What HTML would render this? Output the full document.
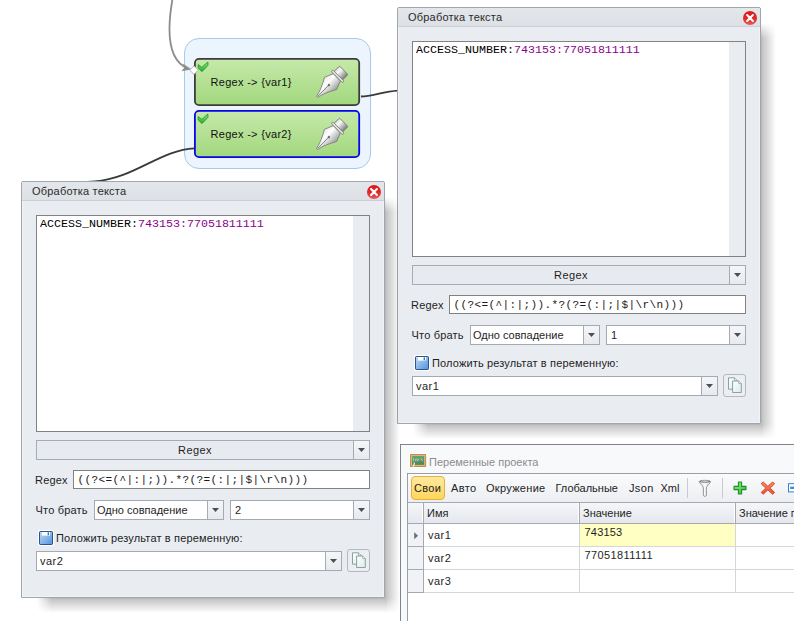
<!DOCTYPE html>
<html><head><meta charset="utf-8">
<style>
html,body{margin:0;padding:0}
html{overflow:hidden;background:#fff}
body{width:794px;height:621px;overflow:hidden;background:#fff;position:relative;font:11px/13px "Liberation Sans","DejaVu Sans",sans-serif;color:#1e1e1e}
.abs,.dlg *,.pnl *{position:absolute;box-sizing:border-box}
svg{position:absolute;left:0;top:0;overflow:visible}
.dlg svg *,.pnl svg *{position:static}
/* flow */
.grp{left:184px;top:38px;width:187px;height:131px;border:1px solid #a6c9ec;border-radius:15px;background:#ecf4fd}
.act{left:194px;width:166px;height:48px;padding:2px}
.act span{position:absolute;left:16.5px;top:18px;white-space:nowrap;color:#111;letter-spacing:.3px}
/* dialogs */
.dlg{position:absolute;width:364px;height:417px;background:#e9ecf1;border:1px solid #a0a6ae;box-sizing:border-box;box-shadow:inset 0 0 0 1px rgba(255,255,255,.4);border-radius:2px 2px 0 0}
.sh{position:absolute;pointer-events:none}
.dlg .tb{left:0;top:0;width:362px;height:19px;border-radius:1px 1px 0 0;background:linear-gradient(#e3e6ea,#dde1e6);border-bottom:1px solid #ccd0d6}
.dlg .tt{left:10px;top:3px;white-space:nowrap;color:#2a2a2a;letter-spacing:.2px}
.dlg .ta{left:14px;top:33px;width:334px;height:216px;background:#fff;border:1px solid #828282}
.dlg .sb{right:0;top:0;width:16px;height:214px;background:#e9ecf1}
.mono{font-family:"Liberation Mono","DejaVu Sans Mono",monospace;font-size:11.67px;white-space:nowrap}
.dlg .code{left:3px;top:2px;color:#000}
.dlg .code i{font-style:normal;color:#8b008b}
.btn{background:#e7eaef;border:1px solid #a6acb5}
.dlg .rb{left:14px;top:257px;width:334px;height:20px;text-align:center;line-height:18px;padding-right:16px;letter-spacing:.4px}
.dlg .ar{width:16px;top:0;bottom:0;right:0;border-left:1px solid #a6acb5;background:linear-gradient(#f5f6f8,#e8eaee)}
.dlg .ar:after{content:"";position:absolute;left:4px;top:7px;width:7px;height:4px;background:#4b5058;clip-path:polygon(0 0,100% 0,50% 100%)}
.dlg .lb{white-space:nowrap}
.dlg .in{background:#fff;border:1px solid #a4aab3;white-space:nowrap}
/* panel */
.pnl{position:absolute;left:400px;top:444px;width:420px;height:200px;background:#f8f9fb;border:1px solid #7f848b;box-sizing:border-box}
.pnl .fr{left:6px;top:28px;width:420px;height:200px;border:1px solid #9a9fa7;background:#fff}
.pnl .tl{left:0;top:0;width:420px;height:28px;background:linear-gradient(#fafbfc,#eceef2)}
.pnl .tl span{position:absolute;top:8px;white-space:nowrap;color:#222}
.pnl .sv{left:3px;top:2px;width:34px;height:24px;border:1px solid #e5b13a;border-radius:4px;background:linear-gradient(#ffe9a2,#ffd65c)}
.pnl .sep{top:4px;width:1px;height:20px;background:#c8ccd2}
.pnl .hd{left:0;top:28px;width:420px;height:22px;background:linear-gradient(#f5f6f9,#e4e7ec);border-top:1px solid #a5aab2;border-bottom:1px solid #a5aab2}
.pnl .hd span,.pnl .row span{position:absolute;top:4px;white-space:nowrap}
.pnl .vl{width:1px;background:#d3d6db}
.pnl .hl{width:1px;background:#a5aab2;top:29px;height:20px}
.pnl .row{left:0;width:420px;height:23px;border-bottom:1px solid #d3d6db}
.pnl .ind{left:0;top:50px;width:16px;height:69px;background:#f0f2f5}
</style></head><body>
<svg width="794" height="621" viewBox="0 0 794 621" fill="none">
<defs>
<linearGradient id="nib" x1="0" y1="0" x2="1" y2="0"><stop offset="0" stop-color="#e9e9e9"/><stop offset=".35" stop-color="#ffffff"/><stop offset="1" stop-color="#9c9c9c"/></linearGradient>
<linearGradient id="cap" x1="0" y1="0" x2="1" y2="0"><stop offset="0" stop-color="#d8d8d8"/><stop offset=".3" stop-color="#fafafa"/><stop offset="1" stop-color="#7d7d7d"/></linearGradient>
<linearGradient id="chk" x1="0" y1="0" x2="0" y2="1"><stop offset="0" stop-color="#93e693"/><stop offset=".6" stop-color="#4cc94c"/><stop offset="1" stop-color="#22a822"/></linearGradient>
<g id="pen"><path d="M-0.9,-0.6 C-2,-7 -5,-12.5 -8.6,-19.3 L-5,-28 L5,-28 L8.6,-19.3 C5,-12.5 2,-7 0.9,-0.6 C0.5,0.4 -0.5,0.4 -0.9,-0.6 Z" fill="url(#nib)" stroke="#7a7a7a" stroke-width=".8"/>
<rect x="-6" y="-37.8" width="12" height="8.6" rx="1" fill="url(#cap)" stroke="#707070" stroke-width=".8"/>
<rect x="-8" y="-30.3" width="16" height="2.2" rx="1" fill="#e8e8e8" stroke="#707070" stroke-width=".8"/>
<path d="M0,-16.5 L0,-1" stroke="#777" stroke-width=".8"/><circle cx="0" cy="-16.8" r="1.2" fill="#6a6a6a"/></g>
<path id="check" d="M0,2.6 L3.6,5.4 L9.7,0 L9.7,3.4 L3.8,9.6 L0,6 Z" fill="url(#chk)" stroke="#1f961f" stroke-width=".9"/>
</defs>
</svg>
<div class="abs grp"></div>
<svg width="794" height="621" viewBox="0 0 794 621" fill="none">
<defs><linearGradient id="grn" x1="0" y1="0" x2="0" y2="1"><stop offset="0" stop-color="#c6e9aa"/><stop offset="1" stop-color="#a2d87d"/></linearGradient></defs>
<rect x="194.9" y="58.9" width="164.3" height="46.2" rx="4.2" fill="url(#grn)" stroke="#3c3c3c" stroke-width="1.8"/>
<rect x="194.9" y="110.9" width="164.3" height="46.2" rx="4.2" fill="url(#grn)" stroke="#0505f0" stroke-width="1.8"/>
</svg>
<div class="abs act" style="top:58px"><span>Regex -&gt; {var1}</span></div>
<div class="abs act" style="top:110px"><span>Regex -&gt; {var2}</span></div>
<svg width="794" height="621" viewBox="0 0 794 621" fill="none">
<path d="M172.3,0 C168,25 166,60 188,68.6" stroke="#8c8c8c" stroke-width="1.8"/>
<path d="M361,96.5 C372,96.5 383,91.5 398,90.6" stroke="#3a3a3a" stroke-width="1.8"/>
<path d="M194.5,148.3 C160,150 135,178 95,181.5 L80,182.5" stroke="#3a3a3a" stroke-width="1.8"/>
<path d="M183.2,64.2 L190.8,69.2 L182,70.8 L184.8,67.5 Z" fill="#8c8c8c" stroke="#8c8c8c" stroke-width=".6"/>
<path d="M194,65.8 L198.3,70.1 L194,74.4 L189.7,70.1 Z" fill="#fff" stroke="#a8a8a8" stroke-width=".9"/>
<use href="#check" x="198.2" y="62"/>
<use href="#check" x="198.2" y="114"/>
<use href="#pen" transform="translate(317,97) rotate(45)"/>
<use href="#pen" transform="translate(317,149) rotate(45)"/>
</svg>
<div class="sh" style="left:761px;top:38px;width:15px;height:386px;background:linear-gradient(to right,rgba(0,0,0,.29),rgba(0,0,0,.22) 12%,rgba(0,0,0,0))"></div>
<div class="sh" style="left:761px;top:23px;width:15px;height:15px;background:linear-gradient(to right,rgba(0,0,0,.29),rgba(0,0,0,.22) 12%,rgba(0,0,0,0));-webkit-mask-image:linear-gradient(to bottom,transparent,#000);mask-image:linear-gradient(to bottom,transparent,#000)"></div>
<div class="sh" style="left:428px;top:424px;width:333px;height:15px;background:linear-gradient(to bottom,rgba(0,0,0,.29),rgba(0,0,0,.22) 12%,rgba(0,0,0,0))"></div>
<div class="sh" style="left:413px;top:424px;width:15px;height:15px;background:linear-gradient(to bottom,rgba(0,0,0,.29),rgba(0,0,0,.22) 12%,rgba(0,0,0,0));-webkit-mask-image:linear-gradient(to right,transparent,#000);mask-image:linear-gradient(to right,transparent,#000)"></div>
<div class="sh" style="left:761px;top:424px;width:15px;height:15px;background:linear-gradient(to right,rgba(0,0,0,.29),rgba(0,0,0,.22) 12%,rgba(0,0,0,0));-webkit-mask-image:linear-gradient(to top,transparent,#000);mask-image:linear-gradient(to top,transparent,#000)"></div>
<div class="dlg" style="left:397px;top:7px">
 <div class="tb"></div><div class="tt">Обработка текста</div>
 <svg style="left:344px;top:2px" width="16" height="16" viewBox="0 0 16 16"><defs><linearGradient id="cl1" x1="0" y1="0" x2="0" y2="1"><stop offset="0" stop-color="#e01818"/><stop offset=".5" stop-color="#e22626"/><stop offset="1" stop-color="#ea5a5a"/></linearGradient></defs><circle cx="8" cy="8" r="7" fill="url(#cl1)"/><path d="M5.1,5.1 L10.9,10.9 M10.9,5.1 L5.1,10.9" stroke="#fff" stroke-width="2.1" stroke-linecap="round"/></svg>
 <div class="ta" style="height:216px"><div class="sb" style="height:214px"></div><div class="mono code">ACCESS_NUMBER:<i>743153:77051811111</i></div></div>
 <div style="left:0;top:0px;width:0;height:0">
 <div class="btn rb">Regex<div class="ar"></div></div>
 <div class="lb" style="left:13px;top:291px;letter-spacing:.2px">Regex</div>
 <div class="in" style="left:51px;top:287px;width:297px;height:19px;border-color:#828282"><div class="mono" style="left:3.5px;top:3px;color:#1a1a1a;font-size:11px;letter-spacing:.4px">((?&lt;=(^|:|;)).*?(?=(:|;|$|\r\n)))</div></div>
 <div class="lb" style="left:13.5px;top:321px;letter-spacing:.2px">Что брать</div>
 <div class="in" style="left:72px;top:317px;width:130px;height:20px"><div style="left:2px;top:3px">Одно совпадение</div><div class="ar"></div></div>
 <div class="in" style="left:208px;top:317px;width:140px;height:20px"><div style="left:4px;top:3px">1</div><div class="ar"></div></div>
 <svg style="left:16px;top:347px" width="16" height="16" viewBox="0 0 16 16"><defs><linearGradient id="sv1" x1="0" y1="0" x2="1" y2="1"><stop offset="0" stop-color="#c4dcf6"/><stop offset="1" stop-color="#4f92dc"/></linearGradient></defs><rect x="0" y="0" width="16" height="16" rx="1.5" fill="#fff"/><rect x="1.5" y="1.5" width="13" height="13" rx=".7" fill="url(#sv1)" stroke="#27558f" stroke-width="1"/><rect x="4" y="2" width="8" height="3.6" fill="#fff"/><rect x="9.6" y="2.4" width="1.4" height="2.8" fill="#3a70b4"/></svg>
 <div class="lb" style="left:34px;top:349px;letter-spacing:.15px">Положить результат в переменную:</div>
 <div class="in" style="left:14px;top:368px;width:306px;height:20px"><div style="left:3px;top:3px;letter-spacing:.5px">var1</div><div class="ar"></div></div>
 <div class="btn" style="left:325px;top:366px;width:23px;height:23px;border-radius:3px;background:#eceef1;border-color:#b4b8bf"></div>
 <svg style="left:329px;top:369px" width="16" height="17" viewBox="0 0 16 17"><defs><linearGradient id="pg1" x1="0" y1="0" x2="1" y2="1"><stop offset="0" stop-color="#ffffff"/><stop offset="1" stop-color="#dcebea"/></linearGradient></defs><path d="M1.5,0.8 L7.5,0.8 L9.8,3.2 L9.8,12.2 L1.5,12.2 Z" fill="url(#pg1)" stroke="#7b9a96" stroke-width=".9"/><path d="M5.6,4 L11.8,4 L14.3,6.6 L14.3,15.5 L5.6,15.5 Z" fill="url(#pg1)" stroke="#7b9a96" stroke-width=".9"/><path d="M11.8,4 L11.8,6.6 L14.3,6.6" fill="#fff" stroke="#7b9a96" stroke-width=".7"/><path d="M7.5,0.8 L7.5,3.2 L9.8,3.2" fill="#fff" stroke="#7b9a96" stroke-width=".7"/></svg>
 </div>
</div>
<div class="sh" style="left:385px;top:212px;width:15px;height:386px;background:linear-gradient(to right,rgba(0,0,0,.29),rgba(0,0,0,.22) 12%,rgba(0,0,0,0))"></div>
<div class="sh" style="left:385px;top:197px;width:15px;height:15px;background:linear-gradient(to right,rgba(0,0,0,.29),rgba(0,0,0,.22) 12%,rgba(0,0,0,0));-webkit-mask-image:linear-gradient(to bottom,transparent,#000);mask-image:linear-gradient(to bottom,transparent,#000)"></div>
<div class="sh" style="left:52px;top:598px;width:333px;height:15px;background:linear-gradient(to bottom,rgba(0,0,0,.29),rgba(0,0,0,.22) 12%,rgba(0,0,0,0))"></div>
<div class="sh" style="left:37px;top:598px;width:15px;height:15px;background:linear-gradient(to bottom,rgba(0,0,0,.29),rgba(0,0,0,.22) 12%,rgba(0,0,0,0));-webkit-mask-image:linear-gradient(to right,transparent,#000);mask-image:linear-gradient(to right,transparent,#000)"></div>
<div class="sh" style="left:385px;top:598px;width:15px;height:15px;background:linear-gradient(to right,rgba(0,0,0,.29),rgba(0,0,0,.22) 12%,rgba(0,0,0,0));-webkit-mask-image:linear-gradient(to top,transparent,#000);mask-image:linear-gradient(to top,transparent,#000)"></div>
<div class="dlg" style="left:21px;top:181px">
 <div class="tb"></div><div class="tt">Обработка текста</div>
 <svg style="left:344px;top:2px" width="16" height="16" viewBox="0 0 16 16"><defs><linearGradient id="cl2" x1="0" y1="0" x2="0" y2="1"><stop offset="0" stop-color="#e01818"/><stop offset=".5" stop-color="#e22626"/><stop offset="1" stop-color="#ea5a5a"/></linearGradient></defs><circle cx="8" cy="8" r="7" fill="url(#cl2)"/><path d="M5.1,5.1 L10.9,10.9 M10.9,5.1 L5.1,10.9" stroke="#fff" stroke-width="2.1" stroke-linecap="round"/></svg>
 <div class="ta" style="height:217px"><div class="sb" style="height:215px"></div><div class="mono code">ACCESS_NUMBER:<i>743153:77051811111</i></div></div>
 <div style="left:0;top:1px;width:0;height:0">
 <div class="btn rb">Regex<div class="ar"></div></div>
 <div class="lb" style="left:13px;top:291px;letter-spacing:.2px">Regex</div>
 <div class="in" style="left:51px;top:287px;width:297px;height:19px;border-color:#828282"><div class="mono" style="left:3.5px;top:3px;color:#1a1a1a;font-size:11px;letter-spacing:.4px">((?&lt;=(^|:|;)).*?(?=(:|;|$|\r\n)))</div></div>
 <div class="lb" style="left:13.5px;top:321px;letter-spacing:.2px">Что брать</div>
 <div class="in" style="left:72px;top:317px;width:130px;height:20px"><div style="left:2px;top:3px">Одно совпадение</div><div class="ar"></div></div>
 <div class="in" style="left:208px;top:317px;width:140px;height:20px"><div style="left:4px;top:3px">2</div><div class="ar"></div></div>
 <svg style="left:16px;top:347px" width="16" height="16" viewBox="0 0 16 16"><defs><linearGradient id="sv2" x1="0" y1="0" x2="1" y2="1"><stop offset="0" stop-color="#c4dcf6"/><stop offset="1" stop-color="#4f92dc"/></linearGradient></defs><rect x="0" y="0" width="16" height="16" rx="1.5" fill="#fff"/><rect x="1.5" y="1.5" width="13" height="13" rx=".7" fill="url(#sv2)" stroke="#27558f" stroke-width="1"/><rect x="4" y="2" width="8" height="3.6" fill="#fff"/><rect x="9.6" y="2.4" width="1.4" height="2.8" fill="#3a70b4"/></svg>
 <div class="lb" style="left:34px;top:349px;letter-spacing:.15px">Положить результат в переменную:</div>
 <div class="in" style="left:14px;top:368px;width:306px;height:20px"><div style="left:3px;top:3px;letter-spacing:.5px">var2</div><div class="ar"></div></div>
 <div class="btn" style="left:325px;top:366px;width:23px;height:23px;border-radius:3px;background:#eceef1;border-color:#b4b8bf"></div>
 <svg style="left:329px;top:369px" width="16" height="17" viewBox="0 0 16 17"><defs><linearGradient id="pg2" x1="0" y1="0" x2="1" y2="1"><stop offset="0" stop-color="#ffffff"/><stop offset="1" stop-color="#dcebea"/></linearGradient></defs><path d="M1.5,0.8 L7.5,0.8 L9.8,3.2 L9.8,12.2 L1.5,12.2 Z" fill="url(#pg2)" stroke="#7b9a96" stroke-width=".9"/><path d="M5.6,4 L11.8,4 L14.3,6.6 L14.3,15.5 L5.6,15.5 Z" fill="url(#pg2)" stroke="#7b9a96" stroke-width=".9"/><path d="M11.8,4 L11.8,6.6 L14.3,6.6" fill="#fff" stroke="#7b9a96" stroke-width=".7"/><path d="M7.5,0.8 L7.5,3.2 L9.8,3.2" fill="#fff" stroke="#7b9a96" stroke-width=".7"/></svg>
 </div>
</div>
<div class="pnl">
 <svg style="left:8.2px;top:8.3px" width="18" height="15.9" viewBox="0 0 17 15"><defs><linearGradient id="brd" x1="0" y1="0" x2="0" y2="1"><stop offset="0" stop-color="#6aa277"/><stop offset="1" stop-color="#4b875a"/></linearGradient></defs><rect x=".3" y=".3" width="16.4" height="13.6" rx="1" fill="#fff"/><rect x="1" y="1" width="15.2" height="12.2" rx=".8" fill="#a8824e"/><rect x="1.7" y="1.6" width="13.8" height="10.8" rx=".5" fill="#e3b76c"/><rect x="2.9" y="2.8" width="11.4" height="8.4" fill="url(#brd)"/><path d="M4,5 L4.4,7 M5.6,5.6 L6.8,7.8 M7.4,5 L8,7.4 M9,5.6 L9.4,7 M11.4,5 L12.6,7.4 M4,8.2 L5,8.4" stroke="#d3ead6" stroke-width=".7"/><path d="M5.2,9.2 L4.2,12.8" stroke="#f2f2f2" stroke-width="1.1"/></svg>
 <div style="left:28px;top:11px;color:#8c8c8c;white-space:nowrap">Переменные проекта</div>
 <div class="fr">
  <div class="tl"><div class="sv"></div>
   <span style="left:6px;letter-spacing:.3px">Свои</span><span style="left:43px;letter-spacing:.4px">Авто</span><span style="left:78px;letter-spacing:.3px">Окружение</span><span style="left:147.5px">Глобальные</span><span style="left:221px;letter-spacing:.35px">Json</span><span style="left:252.5px">Xml</span>
   <div class="sep" style="left:279px"></div><div class="sep" style="left:314px"></div>
   <svg style="left:290px;top:5px" width="14" height="19" viewBox="0 0 14 19"><defs><linearGradient id="fn" x1="0" y1="0" x2="1" y2="0"><stop offset="0" stop-color="#dcdcdc"/><stop offset=".5" stop-color="#fbfbfb"/><stop offset="1" stop-color="#d0d0d0"/></linearGradient></defs><path d="M1.2,2.6 C1.2,.9 12.6,.9 12.6,2.6 C12.6,4.2 8.4,6.8 8.4,8.8 L8.4,16.4 C8.4,17.6 5.4,17.6 5.4,16.4 L5.4,8.8 C5.4,6.8 1.2,4.2 1.2,2.6 Z" fill="url(#fn)" stroke="#8c8c8c" stroke-width=".9"/><path d="M1.8,2.4 C3.5,3.5 10.3,3.5 12,2.4" stroke="#6e6e6e" stroke-width="1" fill="none"/></svg>
   <svg style="left:325px;top:7px" width="14" height="14" viewBox="0 0 14 14"><defs><linearGradient id="pl" x1="0" y1="0" x2="1" y2="1"><stop offset="0" stop-color="#a4eba2"/><stop offset=".55" stop-color="#5fd05f"/><stop offset="1" stop-color="#2fae2f"/></linearGradient></defs><path d="M5.4,1 h3.2 v4.4 h4.4 v3.2 h-4.4 v4.4 h-3.2 v-4.4 h-4.4 v-3.2 h4.4 Z" fill="url(#pl)" stroke="#1f8f24" stroke-width="1.1" stroke-linejoin="round"/></svg>
   <svg style="left:352px;top:7px" width="16" height="14" viewBox="0 0 16 14"><defs><linearGradient id="xr" x1="0" y1="0" x2="0" y2="1"><stop offset="0" stop-color="#f68a68"/><stop offset="1" stop-color="#ea5230"/></linearGradient></defs><path d="M1.2,2.8 L3.1,.9 L7.9,5.3 L12.7,.9 L14.6,2.8 L10,7.1 L14.6,11.4 L12.7,13.3 L7.9,8.9 L3.1,13.3 L1.2,11.4 L5.8,7.1 Z" fill="url(#xr)" stroke="#de3a1a" stroke-width=".9" stroke-linejoin="round"/></svg>
   <svg style="left:380px;top:9px" width="12" height="10" viewBox="0 0 12 10"><rect x=".5" y=".7" width="11" height="8.2" fill="#fff" stroke="#3580d2" stroke-width="1"/><rect x="2.2" y="3.6" width="8" height="2.4" fill="#3f8ada"/></svg>
  </div>
  <div class="hd"></div>
  <div class="ind"></div>
  <div class="row" style="top:50px"><div style="left:172px;top:0;width:155px;height:22px;background:#ffffc4"></div><span style="left:20px;top:5px;letter-spacing:.5px">var1</span><span style="left:176.5px;top:2px;letter-spacing:.2px">743153</span></div>
  <div class="row" style="top:73px"><span style="left:20px;top:5px;letter-spacing:.5px">var2</span><span style="left:176.5px;top:2px;letter-spacing:.4px">77051811111</span></div>
  <div class="row" style="top:96px"><span style="left:20px;top:5px;letter-spacing:.5px">var3</span></div>
  <div class="vl" style="left:15px;top:50px;height:69px;background:#a5aab2"></div><div class="vl" style="left:171px;top:50px;height:69px"></div><div class="vl" style="left:327px;top:50px;height:69px"></div>
  <div class="hl" style="left:15px"></div><div class="hl" style="left:171px"></div><div class="hl" style="left:327px"></div>
  <div style="left:19px;top:33px;white-space:nowrap">Имя</div><div style="left:175px;top:33px;white-space:nowrap">Значение</div><div style="left:331px;top:33px;white-space:nowrap">Значение по умолчанию</div>
  <div style="left:0;top:72px;width:16px;height:1px;background:#a5aab2"></div><div style="left:0;top:95px;width:16px;height:1px;background:#a5aab2"></div><div style="left:0;top:118px;width:16px;height:1px;background:#a5aab2"></div>
  <div class="hl" style="left:14px;background:#fff"></div><div class="hl" style="left:170px;background:#fff"></div><div class="hl" style="left:326px;background:#fff"></div>
  <svg style="left:6px;top:58.2px" width="5" height="8" viewBox="0 0 5 8"><path d="M.2,.2 L4.1,3.7 L.2,7.2 Z" fill="#6a7078"/></svg>
 </div>
</div>
</body></html>
